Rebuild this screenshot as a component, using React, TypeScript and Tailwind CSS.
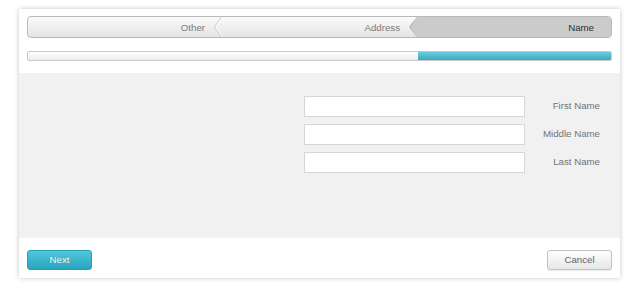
const steps = [
  { label: "Other", active: false, w: "w-[186px]" },
  { label: "Address", active: false, w: "w-[195px]" },
  { label: "Name", active: true, w: "flex-1" },
];

const fields = ["First Name", "Middle Name", "Last Name"];

function Chevron({ active }: { active: boolean }) {
  // the left-pointing separator drawn at the start of each later step
  return (
    <svg
      className="absolute left-0 top-0 h-full w-[9px]"
      viewBox="0 0 9 22"
      preserveAspectRatio="none"
    >
      {active ? (
        <polyline points="8,-1 0.6,11 8,23" fill="none" stroke="#a8a8a8" strokeWidth="1" />
      ) : (
        <>
          <polyline points="8,-1 0.6,11 8,23" fill="none" stroke="#d2d2d2" strokeWidth="1.2" />
          <polyline points="9.2,-1 1.8,11 9.2,23" fill="none" stroke="#ffffff" strokeWidth="1" />
        </>
      )}
    </svg>
  );
}

export default function App() {
  return (
    <div className="min-h-[291px] w-[635px] bg-white pt-[9px] pl-[19px] font-['Liberation_Sans',Arial,sans-serif] text-[9.7px]">
      <div className="w-[601px] bg-white shadow-[0_0_5px_rgba(0,0,0,0.22)]">
        {/* wizard steps */}
        <div className="px-2 pt-[7px]">
          <div className="flex h-[22px] overflow-hidden rounded-[4px] border border-[#b9b9b9] bg-gradient-to-b from-[#fbfbfb] to-[#e4e4e4]">
            {steps.map((s, i) => (
              <div
                key={s.label}
                className={
                  "relative flex shrink-0 items-center justify-end pt-[2px] " +
                  s.w +
                  " " +
                  (s.active
                    ? "bg-[#cbcbcb] pr-[17px] text-[#2e2e2e] [clip-path:polygon(8px_0,100%_0,100%_100%,8px_100%,0_50%)]"
                    : "pr-[9px] text-[#7a7a7a]")
                }
              >
                {i > 0 && <Chevron active={s.active} />}
                <span className="leading-none">{s.label}</span>
              </div>
            ))}
          </div>

          {/* progress */}
          <div className="mt-[13px] flex h-[10px] overflow-hidden rounded-[2px] border border-[#c9c9c9] bg-gradient-to-b from-[#ffffff] to-[#ececec]">
            <div className="ml-auto h-full w-[193px] bg-gradient-to-b from-[#6ccbdb] to-[#35adc3]" />
          </div>
        </div>

        {/* form body */}
        <div className="mt-[12px] flex h-[165px] flex-col items-end gap-[7px] bg-[#f1f1f1] pt-[23px] pr-[20px]">
          {fields.map((f) => (
            <div key={f} className="flex items-center">
              <input
                type="text"
                className="h-[21px] w-[221px] border border-[#d6d6d6] bg-white outline-none"
              />
              <label className="w-[75px] text-right text-[#737373]">{f}</label>
            </div>
          ))}
        </div>

        {/* footer */}
        <div className="flex items-center justify-between px-2 pt-[12px] pb-[8px]">
          <button className="h-[20px] w-[65px] rounded-[3px] border border-[#25a0b6] bg-gradient-to-b from-[#52c7da] to-[#24a5bd] text-white [text-shadow:0_0_1px_rgba(0,0,0,0.25)]">
            Next
          </button>
          <button className="h-[20px] w-[65px] rounded-[3px] border border-[#c3c3c3] bg-gradient-to-b from-[#ffffff] to-[#e6e6e6] text-[#666] shadow-[0_1px_1px_rgba(0,0,0,0.08)]">
            Cancel
          </button>
        </div>
      </div>
    </div>
  );
}
